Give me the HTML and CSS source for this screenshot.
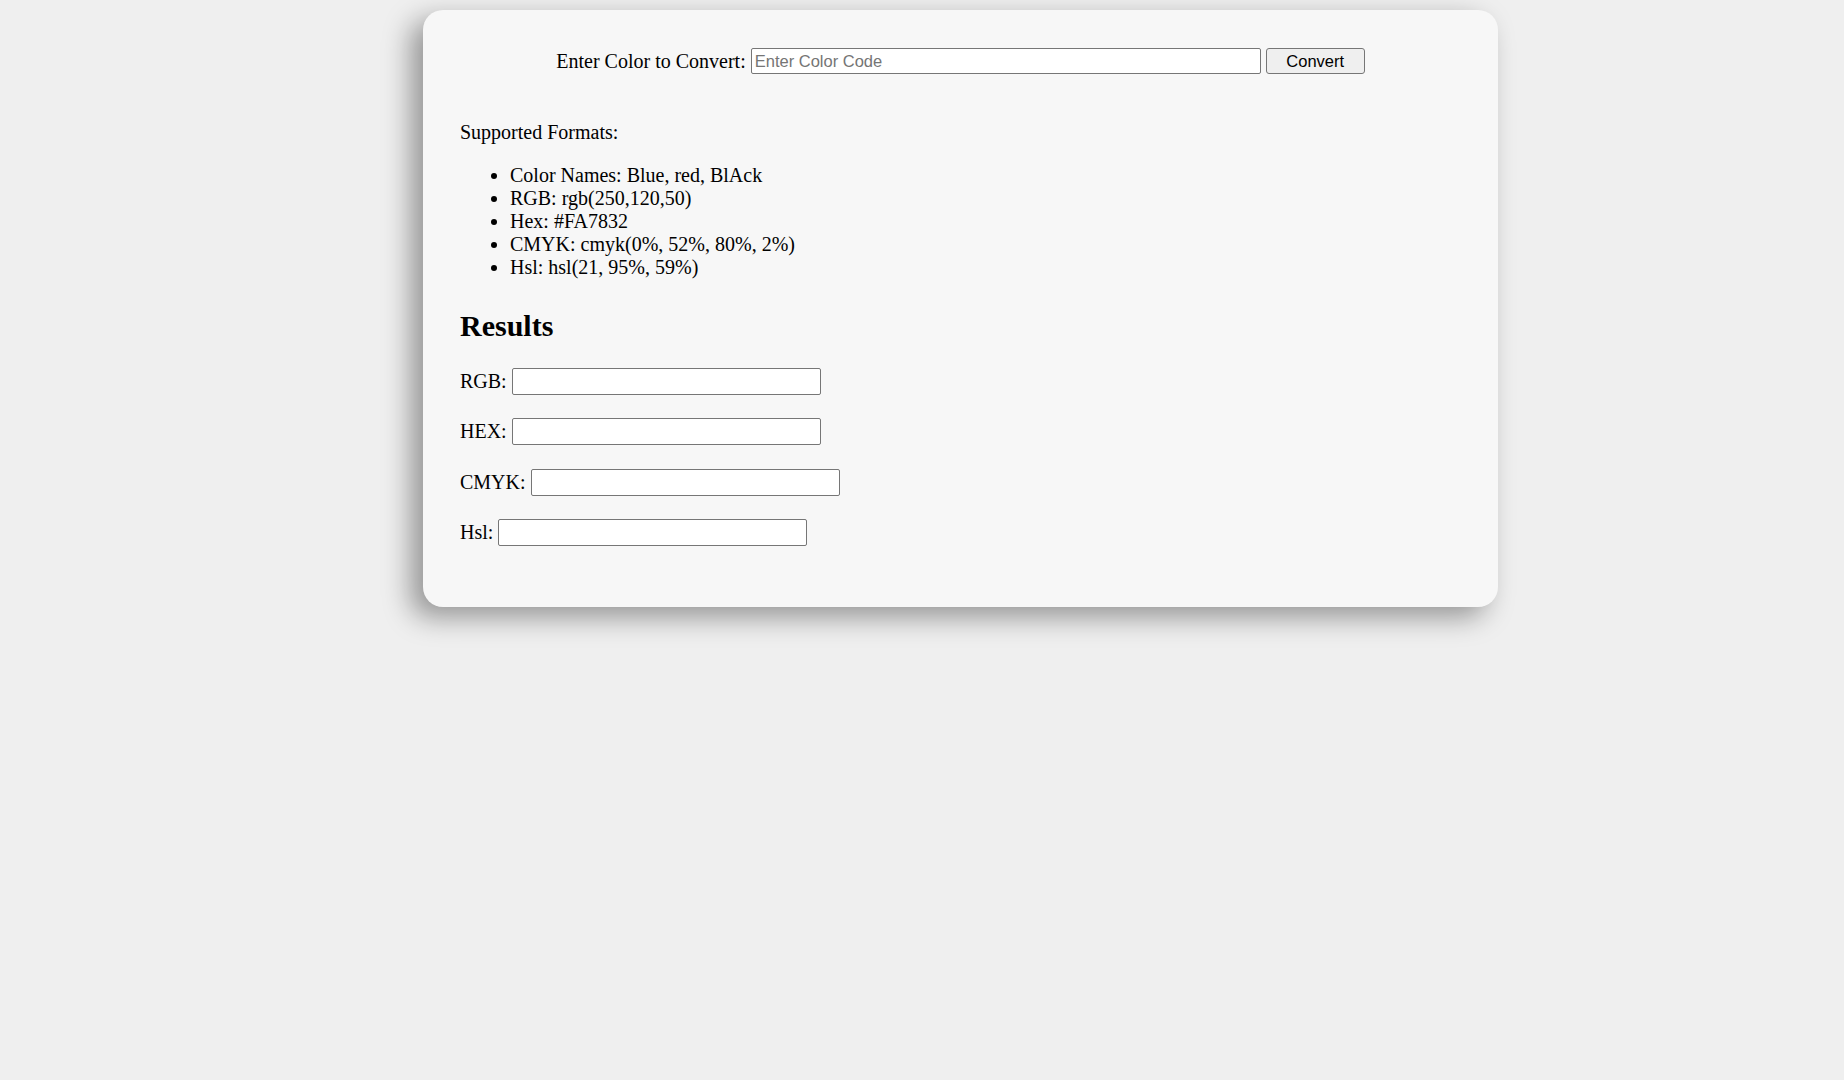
FILE: index.html
```html
<!DOCTYPE html>
<html>
<head>
	<meta charset="utf-8">
	<meta name="viewport" content="width=device-width, initial-scale=1">
	<title>Color Converter</title>

	<link rel="stylesheet" href="styles.css">
</head>
<body>
	<main class="card">
		<div class="convert-row">
			<label for="color_input">Enter Color to Convert:</label>
			<input type="text" id="color_input" class="color-input" placeholder="Enter Color Code">
			<button type="button" class="convert-btn">Convert</button>
		</div>

		<p class="formats-title">Supported Formats:</p>
		<ul class="formats">
			<li>Color Names: Blue, red, BlAck</li>
			<li>RGB: rgb(250,120,50)</li>
			<li>Hex: #FA7832</li>
			<li>CMYK: cmyk(0%, 52%, 80%, 2%)</li>
			<li>Hsl: hsl(21, 95%, 59%)</li>
		</ul>

		<h2>Results</h2>
		<div class="results">
			<div class="result-row">
				<label for="rgb_out">RGB:</label>
				<input type="text" id="rgb_out" class="result-input">
			</div>
			<div class="result-row">
				<label for="hex_out">HEX:</label>
				<input type="text" id="hex_out" class="result-input">
			</div>
			<div class="result-row">
				<label for="cmyk_out">CMYK:</label>
				<input type="text" id="cmyk_out" class="result-input">
			</div>
			<div class="result-row">
				<label for="hsl_out">Hsl:</label>
				<input type="text" id="hsl_out" class="result-input">
			</div>
		</div>
	</main>
</body>
</html>
```

FILE: styles.css
```css
* {
	box-sizing: border-box;
}

html {
	font-size: 20px;
	background: #efefef;
}

body {
	margin: 0;
	padding-top: 10px;
	min-height: 100vh;
	font-family: "Liberation Serif", "Times New Roman", serif;
	line-height: 23px;
	color: #000;
	background: #efefef;
}

.card {
	width: 1075px;
	margin-left: 423px;
	padding: 38px 37px 61px 37px;
	background: #f7f7f7;
	border-radius: 20px;
	box-shadow: -12px 10px 28px rgba(0, 0, 0, 0.38);
}

.convert-row {
	display: flex;
	justify-content: center;
	align-items: center;
	gap: 5px;
	height: 26px;
}

input, button {
	font-family: "Liberation Sans", Arial, sans-serif;
	font-size: 16.5px;
	margin: 0;
}

input {
	height: 27px;
	padding: 1px 3px;
	border: 1px solid #767676;
	border-radius: 2px;
	background: #fff;
	color: #000;
}

input::placeholder {
	color: #757575;
}

.color-input {
	width: 510px;
	height: 26px;
}

.convert-btn {
	width: 99px;
	height: 26px;
	padding: 0;
	border: 1px solid #767676;
	border-radius: 3px;
	background: #efefef;
	color: #000;
}

.formats-title {
	margin: 47px 0 0;
}

.formats {
	margin: 20px 0 0;
	padding-left: 50px;
}

h2 {
	font-size: 30px;
	line-height: 34px;
	margin: 30px 0 0;
}

.results {
	display: flex;
	flex-direction: column;
	gap: 23.4px;
	margin-top: 25px;
}

.result-row {
	display: flex;
	align-items: center;
	gap: 5px;
	height: 27px;
}

.result-input {
	width: 309px;
}
```
